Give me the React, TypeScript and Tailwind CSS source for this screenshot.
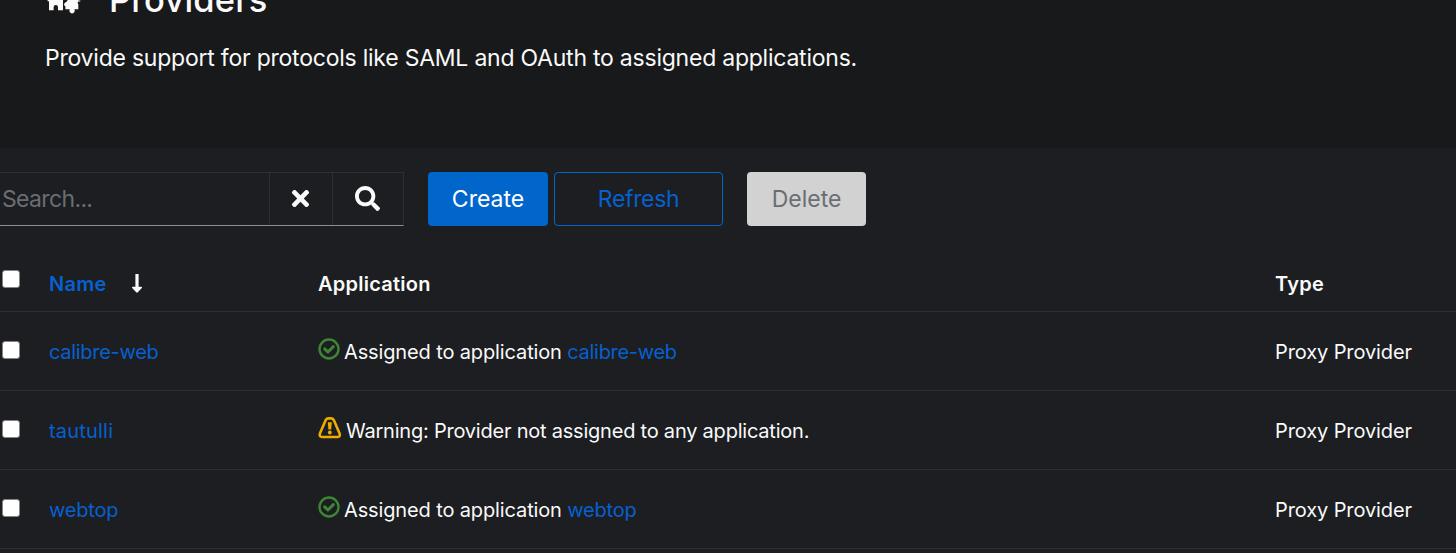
import type { ReactNode } from "react";
import { FaSearch, FaTimes } from "react-icons/fa";

function IntegrationIcon() {
  return (
    <svg viewBox="0 0 36 36" className="h-9 w-9 shrink-0" fill="currentColor">
      <path d="M4 5h14v6a3.5 3.5 0 1 0 0 7v13.2h-5v-3a2.2 2.2 0 0 0-4.4 0v3H4V22.2H2.6V21H4z" />
      <path d="M22 14h11.5v7.4h1.8v1.2h-1.8q-1.6.6-.2 2.4v5.3h-4a2.6 2.6 0 1 1-4.4 0H20.4v-3.1a1.9 1.9 0 0 1 0-3.6q2.2-1.4 2.2-2.6H22z" />
    </svg>
  );
}

function SortArrow() {
  return (
    <svg viewBox="0 0 12 20" className="ml-6 h-5 w-3 shrink-0 text-[#fafafa]" fill="currentColor">
      <path d="M4.4 0h3.2v12.8h2.7q1.3.2.5 1.3L6.8 18.3q-.8.7-1.6 0L1.2 14.1q-.8-1.1.5-1.3h2.7z" />
    </svg>
  );
}

function CheckCircle() {
  return (
    <svg viewBox="0 0 22 22" className="mr-1 h-[22px] w-[22px] shrink-0 -translate-y-[3px]" fill="none" stroke="#3e8635">
      <circle cx="11" cy="11" r="9.5" strokeWidth="2.4" />
      <path d="M6.7 10.9l3.2 3.1 5.4-5.4" strokeWidth="3" strokeLinecap="round" strokeLinejoin="round" />
    </svg>
  );
}

function WarningTriangle() {
  return (
    <svg viewBox="0 0 24 22" className="mr-[4px] h-[22px] w-6 shrink-0 -translate-y-[3px]" fill="none" stroke="#f0ab00">
      <path d="M7.6 3.2Q8.7 1.4 10.5 1.4H13Q14.8 1.4 15.9 3.2L21.6 16.6Q22.6 19.9 19.6 20H4Q1 19.9 1.9 16.6z" strokeWidth="2.6" strokeLinejoin="round" />
      <path d="M9.8 5.2h4l-.6 7.4h-2.8z" fill="#f0ab00" stroke="none" />
      <circle cx="11.8" cy="15.5" r="1.9" fill="#f0ab00" stroke="none" />
    </svg>
  );
}

function Checkbox({ label }: { label: string }) {
  return (
    <input
      type="checkbox"
      aria-label={label}
      className="ml-[2px] h-[18px] w-[18px] shrink-0 -translate-y-[2px] appearance-none rounded-[3px] border border-[#858585] bg-white"
    />
  );
}

function Row({ name, tracking, children }: { name: string; tracking: string; children: ReactNode }) {
  return (
    <div className="grid h-[79px] grid-cols-[49px_269px_957px_1fr] items-center border-b border-[#2b2e33] pt-[2px] text-[20px] tracking-[-0.22px]">
      <Checkbox label={name} />
      <a className={`${tracking} text-[#0760d0]`}>{name}</a>
      <div className="flex items-center whitespace-pre">{children}</div>
      <div className="whitespace-nowrap tracking-[-0.1px]">Proxy Provider</div>
    </div>
  );
}

function Assigned({ app, tracking }: { app: string; tracking: string }) {
  return (
    <>
      <CheckCircle />
      <span className="tracking-[-0.13px]">Assigned to application </span>
      <a className={`${tracking} text-[#0760d0]`}>{app}</a>
    </>
  );
}

export default function App() {
  return (
    <div className="h-[553px] w-[1456px] overflow-hidden bg-[#1c1e21] font-['Inter','Liberation_Sans',sans-serif] text-[#fafafa]">
      <header className="h-[148px] overflow-hidden bg-[#18191a] pl-[45px]">
        <div className="-mt-[21px] flex h-[44px] items-start">
          <IntegrationIcon />
          <h1 className="ml-[28px] text-[34.5px] leading-[42px] font-medium tracking-[0.15px]">Providers</h1>
        </div>
        <p className="mt-[17px] text-[23px] leading-[36px] tracking-[-0.23px]">
          Provide support for protocols like SAML and OAuth to assigned applications.
        </p>
      </header>

      <div className="flex items-center pt-6 text-[23px] leading-[36px]">
        <div className="flex h-[54px] w-[404px] border-t border-r border-b border-t-[#2b2e33] border-r-[#2b2e33] border-b-[#8a8d90]">
          <div className="flex w-[269px] items-center pl-[2px] tracking-[-0.65px] text-[#6a6e73]">Search...</div>
          <button className="flex w-[63px] items-center justify-center border-l border-[#2b2e33] pr-[2px] pb-[2px]">
            <FaTimes size={25} />
          </button>
          <button className="flex flex-1 items-center justify-center border-l border-[#2b2e33] pr-[2px] pb-[2px]">
            <FaSearch size={25} />
          </button>
        </div>
        <button className="ml-6 h-[54px] w-[120px] rounded-[4px] bg-[#0066cc] text-white">Create</button>
        <button className="ml-[6px] h-[54px] w-[169px] rounded-[4px] border border-[#0066cc] tracking-[-0.35px] text-[#0760d0]">Refresh</button>
        <button className="ml-6 h-[54px] w-[119px] rounded-[4px] bg-[#d2d2d2] text-[#6a6e73]">Delete</button>
      </div>

      <div className="mt-6 grid h-[62px] grid-cols-[49px_269px_957px_1fr] items-center border-b border-[#2b2e33] pt-[6px] text-[20px] font-semibold tracking-[0.25px]">
        <div className="flex pb-[6px]">
          <Checkbox label="Select all" />
        </div>
        <div className="flex items-center text-[#0760d0]">
          Name
          <SortArrow />
        </div>
        <div>Application</div>
        <div>Type</div>
      </div>
      <Row name="calibre-web" tracking="tracking-[-0.3px]">
        <Assigned app="calibre-web" tracking="tracking-[-0.3px]" />
      </Row>
      <Row name="tautulli" tracking="tracking-[0.2px]">
        <WarningTriangle />
        Warning: Provider not assigned to any application.
      </Row>
      <Row name="webtop" tracking="tracking-[-0.2px]">
        <Assigned app="webtop" tracking="tracking-[-0.2px]" />
      </Row>
    </div>
  );
}
